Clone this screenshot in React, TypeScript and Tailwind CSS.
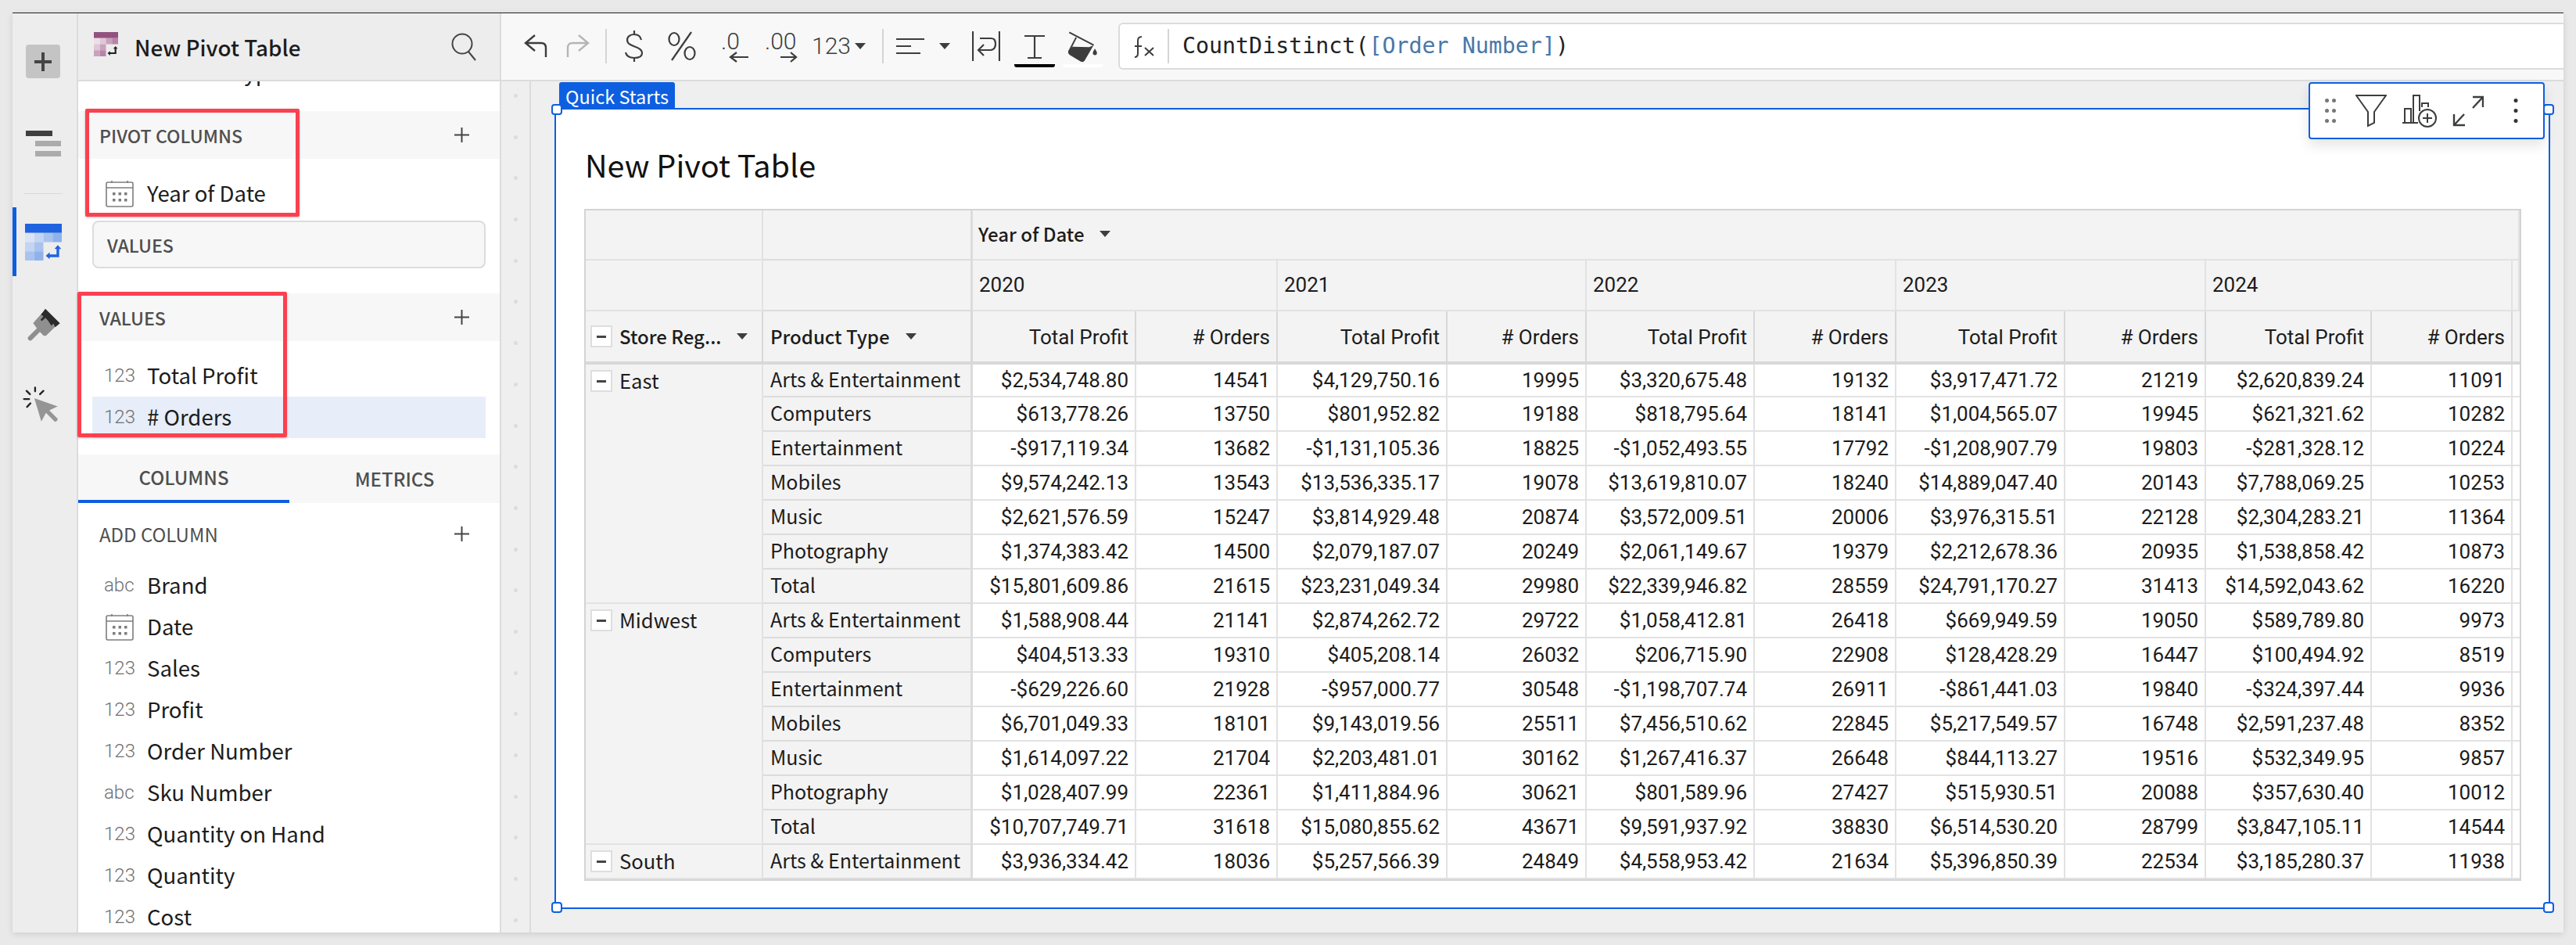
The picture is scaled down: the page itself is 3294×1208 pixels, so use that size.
const sans = "font-['Noto_Sans_CJK_SC',sans-serif]";
const roboto = "font-['Roboto',sans-serif]";

const years = ["2020", "2021", "2022", "2023", "2024"];

const rows: { group?: string; span?: number; label: string; cells: string[] }[] = [
  { group: "East", span: 7, label: "Arts & Entertainment", cells: ["$2,534,748.80", "14541", "$4,129,750.16", "19995", "$3,320,675.48", "19132", "$3,917,471.72", "21219", "$2,620,839.24", "11091"] },
  { label: "Computers", cells: ["$613,778.26", "13750", "$801,952.82", "19188", "$818,795.64", "18141", "$1,004,565.07", "19945", "$621,321.62", "10282"] },
  { label: "Entertainment", cells: ["-$917,119.34", "13682", "-$1,131,105.36", "18825", "-$1,052,493.55", "17792", "-$1,208,907.79", "19803", "-$281,328.12", "10224"] },
  { label: "Mobiles", cells: ["$9,574,242.13", "13543", "$13,536,335.17", "19078", "$13,619,810.07", "18240", "$14,889,047.40", "20143", "$7,788,069.25", "10253"] },
  { label: "Music", cells: ["$2,621,576.59", "15247", "$3,814,929.48", "20874", "$3,572,009.51", "20006", "$3,976,315.51", "22128", "$2,304,283.21", "11364"] },
  { label: "Photography", cells: ["$1,374,383.42", "14500", "$2,079,187.07", "20249", "$2,061,149.67", "19379", "$2,212,678.36", "20935", "$1,538,858.42", "10873"] },
  { label: "Total", cells: ["$15,801,609.86", "21615", "$23,231,049.34", "29980", "$22,339,946.82", "28559", "$24,791,170.27", "31413", "$14,592,043.62", "16220"] },
  { group: "Midwest", span: 7, label: "Arts & Entertainment", cells: ["$1,588,908.44", "21141", "$2,874,262.72", "29722", "$1,058,412.81", "26418", "$669,949.59", "19050", "$589,789.80", "9973"] },
  { label: "Computers", cells: ["$404,513.33", "19310", "$405,208.14", "26032", "$206,715.90", "22908", "$128,428.29", "16447", "$100,494.92", "8519"] },
  { label: "Entertainment", cells: ["-$629,226.60", "21928", "-$957,000.77", "30548", "-$1,198,707.74", "26911", "-$861,441.03", "19840", "-$324,397.44", "9936"] },
  { label: "Mobiles", cells: ["$6,701,049.33", "18101", "$9,143,019.56", "25511", "$7,456,510.62", "22845", "$5,217,549.57", "16748", "$2,591,237.48", "8352"] },
  { label: "Music", cells: ["$1,614,097.22", "21704", "$2,203,481.01", "30162", "$1,267,416.37", "26648", "$844,113.27", "19516", "$532,349.95", "9857"] },
  { label: "Photography", cells: ["$1,028,407.99", "22361", "$1,411,884.96", "30621", "$801,589.96", "27427", "$515,930.51", "20088", "$357,630.40", "10012"] },
  { label: "Total", cells: ["$10,707,749.71", "31618", "$15,080,855.62", "43671", "$9,591,937.92", "38830", "$6,514,530.20", "28799", "$3,847,105.11", "14544"] },
  { group: "South", span: 1, label: "Arts & Entertainment", cells: ["$3,936,334.42", "18036", "$5,257,566.39", "24849", "$4,558,953.42", "21634", "$5,396,850.39", "22534", "$3,185,280.37", "11938"] },
];

const fields: { type: string; name: string }[] = [
  { type: "abc", name: "Brand" },
  { type: "date", name: "Date" },
  { type: "123", name: "Sales" },
  { type: "123", name: "Profit" },
  { type: "123", name: "Order Number" },
  { type: "abc", name: "Sku Number" },
  { type: "123", name: "Quantity on Hand" },
  { type: "123", name: "Quantity" },
  { type: "123", name: "Cost" },
];

function Caret({ className = "" }: { className?: string }) {
  return (
    <svg width="14" height="8" viewBox="0 0 14 8" className={className}>
      <path d="M0 0h14L7 8z" fill="#3d3d3d" />
    </svg>
  );
}

function PlusIcon() {
  return (
    <svg width="19" height="19" viewBox="0 0 19 19" stroke="#444" strokeWidth="2">
      <path d="M9.5 0v19M0 9.5h19" />
    </svg>
  );
}

function CalendarIcon() {
  return (
    <svg width="36" height="35" viewBox="0 0 36 35" fill="none" stroke="#7d7d7d" strokeWidth="1.6">
      <rect x="1" y="3" width="34" height="31" rx="2" />
      <path d="M1 10h34M8 1v3M28 1v3" />
      <g fill="#7d7d7d" stroke="none">
        <rect x="9" y="16" width="3.5" height="3.5" />
        <rect x="16.5" y="16" width="3.5" height="3.5" />
        <rect x="24" y="16" width="3.5" height="3.5" />
        <rect x="9" y="24" width="3.5" height="3.5" />
        <rect x="16.5" y="24" width="3.5" height="3.5" />
        <rect x="24" y="24" width="3.5" height="3.5" />
      </g>
    </svg>
  );
}

function PivotIcon({ size, top, cells, arrow }: { size: number; top: string; cells: string[]; arrow: string }) {
  return (
    <svg width={size} height={size} viewBox="0 0 140 140">
      <rect width="140" height="35" fill={top} />
      <rect x="0" y="35" width="35" height="35" fill={cells[0]} />
      <rect x="35" y="35" width="35" height="35" fill={cells[1]} />
      <rect x="70" y="35" width="35" height="35" fill={cells[2]} />
      <rect x="105" y="35" width="35" height="35" fill={cells[3]} />
      <rect x="0" y="70" width="35" height="35" fill={cells[1]} />
      <rect x="35" y="70" width="35" height="35" fill={cells[2]} />
      <rect x="0" y="105" width="35" height="35" fill={cells[2]} />
      <rect x="35" y="105" width="35" height="35" fill={cells[3]} />
      <path d="M86 122h39V92" fill="none" stroke={arrow} strokeWidth="10" />
      <path d="M112 96l13-15 13 15zM94 109l-15 13 15 13z" fill={arrow} />
    </svg>
  );
}

function Rail() {
  return (
    <div className="flex w-[84px] shrink-0 flex-col border-r-2 border-[#dcdcdc] bg-[#ededed]">
      <div className="ml-[17px] mt-[40px] flex h-[43px] w-[44px] items-center justify-center rounded-[4px] bg-[#c4c4c4]">
        <svg width="22" height="24" viewBox="0 0 22 24" stroke="#444" strokeWidth="4">
          <path d="M11 0v24M0 12h22" />
        </svg>
      </div>
      <div className="ml-[17px] mt-[67px] h-[33px] w-[45px]">
        <svg width="45" height="33" viewBox="0 0 45 33">
          <rect x="0" y="0" width="34" height="7" fill="#3f3f3f" />
          <rect x="12" y="13" width="33" height="7" fill="#ababab" />
          <rect x="12" y="26" width="33" height="7" fill="#ababab" />
        </svg>
      </div>
      <div className="ml-[14px] mt-[47px] h-[1px] w-[50px] bg-[#d8d8d8]" />
      <div className="mt-[17px] flex h-[88px] items-center border-l-[5px] border-[#0d5fe0] pl-[11px]">
        <PivotIcon size={47} top="#1f63e0" cells={["#dbe4f5", "#c3d5f3", "#a8c3ee", "#8fb2ea"]} arrow="#1f63e0" />
      </div>
      <svg width="45" height="45" viewBox="50 370 135 135" className="ml-[17px] mt-[40px]">
        <path d="M67 488L97 458" stroke="#8f8f8f" strokeWidth="18" strokeLinecap="round" />
        <path d="M78 430L112 392L165 442L128 478Q118 482 110 470L98 458Z" fill="#8f8f8f" />
        <path d="M108 398L125 375L181 431L163 446L156 432L148 440L135 420L125 410L112 422L106 418L118 404Z" fill="#2b2b2b" />
      </svg>
      <svg width="48" height="48" viewBox="40 670 145 145" className="ml-[13px] mt-[55px]">
        <path d="M85 718L175 750L143 765L175 798Q176 802 172 806Q167 810 163 808L130 775L112 808Z" fill="#959595" />
        <path d="M88 677v15M55 690l13 13M45 722h20M57 752l13-14M120 690l-13 13" stroke="#222" strokeWidth="7" strokeLinecap="round" />
      </svg>
    </div>
  );
}

function SectionHead({ title }: { title: string }) {
  return (
    <div className="flex h-[61px] shrink-0 items-center justify-between bg-[#f7f7f7] pl-[27px] pr-[39px]">
      <span className={`${sans} text-[23.2px] leading-[30px] font-medium text-[#4f4f4f]`}>{title}</span>
      <PlusIcon />
    </div>
  );
}

function Field({ type, name, selected }: { type: string; name: string; selected?: boolean }) {
  return (
    <div className={`flex h-[53px] shrink-0 items-center ${selected ? "mx-[18px] bg-[#e7edf9] pl-[15px]" : "pl-[33px]"}`}>
      <span className="flex w-[55px] shrink-0">
        {type === "date" ? (
          <span className="ml-[2px]">
            <CalendarIcon />
          </span>
        ) : (
          <span className={`${roboto} mb-[2px] text-[24px] leading-[30px] font-light text-[#6f6f6f]`}>{type}</span>
        )}
      </span>
      <span className={`${sans} mb-[4px] text-[27.6px] leading-[36px] text-[#1c1c1c]`}>{name}</span>
    </div>
  );
}

function Panel() {
  return (
    <div className="flex w-[541px] shrink-0 flex-col overflow-hidden border-r-2 border-[#dcdcdc] bg-white">
      <div className="flex h-[87px] shrink-0 items-center border-b-2 border-[#dcdcdc] bg-[#ededed] pl-[20px] pr-[30px]">
        <span className="mt-[-6px]">
          <PivotIcon size={31} top="#92527f" cells={["#ecdfe8", "#dfc7d8", "#c9a1bc", "#b784a8"]} arrow="#222" />
        </span>
        <span className={`${sans} ml-[21px] text-[27.8px] leading-[38px] font-medium text-[#1c1c1c]`}>New Pivot Table</span>
        <svg width="32" height="36" viewBox="0 0 32 36" fill="none" stroke="#444" strokeWidth="2" className="ml-auto">
          <circle cx="14" cy="14" r="12.5" />
          <path d="M22 24l9 11" />
        </svg>
      </div>
      <div className="h-[38px] shrink-0 overflow-hidden">
        <div className={`${sans} mt-[-30px] pl-[88px] text-[27.6px] leading-[36px] text-[#1c1c1c]`}>Product Type</div>
      </div>
      <SectionHead title="PIVOT COLUMNS" />
      <div className="h-[79px] shrink-0 pt-[18px]">
        <Field type="date" name="Year of Date" />
      </div>
      <div className="mx-[18px] flex h-[61px] shrink-0 items-center rounded-[8px] border-2 border-[#dcdcdc] bg-[#f7f7f7] pl-[17px]">
        <span className={`${sans} text-[23.2px] leading-[30px] font-medium text-[#4f4f4f]`}>VALUES</span>
      </div>
      <div className="h-[32px] shrink-0" />
      <SectionHead title="VALUES" />
      <div className="h-[18px] shrink-0" />
      <Field type="123" name="Total Profit" />
      <Field type="123" name="# Orders" selected />
      <div className="h-[21px] shrink-0" />
      <div className="flex h-[62px] shrink-0 bg-[#f7f7f7]">
        <div className={`${sans} flex w-[270px] items-center justify-center border-b-4 border-[#0d5fe0] text-[24px] font-medium text-[#4f4f4f]`}>COLUMNS</div>
        <div className={`${sans} flex flex-1 items-center justify-center text-[24px] font-medium text-[#4f4f4f]`}>METRICS</div>
      </div>
      <div className="flex h-[79px] shrink-0 items-center justify-between pl-[27px] pr-[39px]">
        <span className={`${sans} text-[24px] leading-[30px] text-[#4f4f4f]`}>ADD COLUMN</span>
        <PlusIcon />
      </div>
      {fields.map((f) => (
        <Field key={f.name} type={f.type} name={f.name} />
      ))}
    </div>
  );
}

function Toolbar() {
  const sep = "h-[44px] w-[2px] shrink-0 bg-[#d4d4d4]";
  return (
    <div className="flex h-[87px] shrink-0 items-center border-b-2 border-[#dcdcdc] bg-[#f8f8f8] pb-[2px]">
      <svg width="30" height="30" viewBox="0 0 30 30" fill="none" stroke="#3d3d3d" strokeWidth="2.4" className="ml-[29px] shrink-0">
        <path d="M2 11h20q6 0 6 6v12M14 1L2 11l12 10" />
      </svg>
      <svg width="30" height="30" viewBox="0 0 30 30" fill="none" stroke="#b5b5b5" strokeWidth="2.4" className="ml-[24px] shrink-0">
        <path d="M28 11H8q-6 0-6 6v12M16 1l12 10-12 10" />
      </svg>
      <div className={`${sep} ml-[20px]`} />
      <svg width="24" height="42" viewBox="0 0 24 42" fill="none" stroke="#3d3d3d" strokeWidth="2.2" className="ml-[23px] shrink-0">
        <path d="M21 13c-1-5-5-7-9-7S3 8 3 13c0 10 19 7 19 17 0 4-4 6-10 6S2 34 1 29M12 1v5M12 36v5" />
      </svg>
      <svg width="36" height="38" viewBox="0 0 36 38" fill="none" stroke="#3d3d3d" strokeWidth="2.2" className="ml-[31px] shrink-0">
        <ellipse cx="8" cy="10" rx="6.5" ry="8" />
        <ellipse cx="28" cy="28" rx="6.5" ry="8" />
        <path d="M30 1L5 37" />
      </svg>
      <svg width="36" height="52" viewBox="0 0 36 52" className="ml-[32px] shrink-0">
        <text x="0" y="30" fontFamily="Roboto" fontWeight="300" fontSize="30" fill="#3d3d3d">.0</text>
        <path d="M35 40H13M20 34l-8 6 8 6" fill="none" stroke="#3d3d3d" strokeWidth="2.2" />
      </svg>
      <svg width="42" height="52" viewBox="0 0 42 52" className="ml-[20px] shrink-0">
        <text x="0" y="30" fontFamily="Roboto" fontWeight="300" fontSize="30" fill="#3d3d3d">.00</text>
        <path d="M20 40h20M33 34l7 6-7 6" fill="none" stroke="#3d3d3d" strokeWidth="2.2" />
      </svg>
      <span className={`${roboto} ml-[18px] text-[30px] leading-[36px] font-light text-[#3d3d3d]`}>123</span>
      <Caret className="ml-[5px] shrink-0" />
      <div className={`${sep} ml-[21px]`} />
      <svg width="36" height="22" viewBox="0 0 36 22" stroke="#3d3d3d" strokeWidth="2.2" className="ml-[16px] shrink-0">
        <path d="M0 2h36M0 11h19M0 20h31" />
      </svg>
      <Caret className="ml-[19px] shrink-0" />
      <svg width="36" height="38" viewBox="0 0 36 38" fill="none" stroke="#3d3d3d" strokeWidth="2.2" className="ml-[28px] shrink-0">
        <path d="M1 0v38M35 0v38M10 9h14q6 0 6 7t-6 8H9M15 17l-7 7 7 7" />
      </svg>
      <div className="ml-[18px] flex w-[52px] shrink-0 flex-col items-center self-end pb-[14px]">
        <svg width="28" height="32" viewBox="0 0 28 32" fill="none" stroke="#3d3d3d" strokeWidth="2.2">
          <path d="M1 2h26M14 2v28M5 30h18" />
        </svg>
        <div className="mt-[6px] h-[4px] w-[52px] rounded-b-[3px] bg-black" />
      </div>
      <div className="ml-[10px] flex w-[51px] shrink-0 flex-col items-center self-end pb-[14px]">
        <svg width="41" height="41" viewBox="700 55 125 125">
          <path d="M710 62L805 112" stroke="#3d3d3d" strokeWidth="6" />
          <path d="M737 82L708 138" stroke="#3d3d3d" strokeWidth="6" />
          <path d="M722 118L788 120L805 112L770 172Q765 180 755 176L712 150Q703 144 707 136Z" fill="#3d3d3d" />
          <path d="M810 126Q802 138 802 143a8 8 0 0016 0Q818 138 810 126Z" fill="#3d3d3d" />
        </svg>
        <div className="mt-[2px] h-[4px] w-[51px] rounded-b-[3px] bg-white" />
      </div>
      <div className="ml-[20px] flex h-[60px] flex-1 items-center rounded-l-[6px] border-y-2 border-l-2 border-[#dcdcdc] bg-white">
        <svg width="26" height="28" viewBox="0 0 26 28" fill="none" stroke="#3d3d3d" strokeWidth="2" className="ml-[18px] mr-[17px] mt-[3px] shrink-0">
          <path d="M10 1Q5 1 5 6V22Q5 27 1 27M1 13H10M14 15L25 25M25 15L14 25" />
        </svg>
        <div className={sep} />
        <span className="ml-[17px] font-['DejaVu_Sans_Mono',monospace] text-[28.3px] leading-[36px] text-[#222]">
          CountDistinct(<span className="text-[#4a78a8]">[Order Number]</span>)
        </span>
      </div>
    </div>
  );
}

function ExpandBox() {
  return (
    <span className="flex h-[28px] w-[28px] shrink-0 items-center justify-center border-2 border-[#dedede] bg-white">
      <span className="h-[3px] w-[12px] bg-[#444]" />
    </span>
  );
}

const headCell = "border-b-2 border-r-2 border-[#e2e2e2] bg-[#f3f3f3]";
const leftLast = "border-b-2 border-r-[3px] border-[#dcdcdc] bg-[#f3f3f3]";
const bodyCell = `${roboto} flex items-center justify-end border-b-2 border-r-2 border-[#e2e2e2] bg-white pr-[8px] text-[26px] text-[#1c1c1c]`;
const subHead = `${roboto} flex items-center justify-end border-b-[4px] border-r-2 border-[#d8d8d8] bg-[#f3f3f3] pr-[8px] pt-[2px] text-[26px] text-[#1c1c1c]`;

function PivotTable() {
  return (
    <div className="grid w-[2477px] grid-cols-[227px_268px_209px_181px_217px_178px_215px_181px_216px_180px_212px_180px_9px] grid-rows-[64px_65px_68px_42px_repeat(14,44px)] border-2 border-[#d4d4d4]">
      {/* row 1 */}
      <div className={headCell} />
      <div className={leftLast} />
      <div className={`${headCell} col-span-11 flex items-center pb-[2px] pl-[7px]`}>
        <span className={`${sans} text-[24px] leading-[30px] font-medium text-[#1c1c1c]`}>Year of Date</span>
        <Caret className="ml-[19px]" />
      </div>
      {/* row 2 */}
      <div className={headCell} />
      <div className={leftLast} />
      {years.map((y) => (
        <div key={y} className={`${headCell} ${roboto} col-span-2 flex items-center pl-[8px] text-[26px] text-[#1c1c1c]`}>
          {y}
        </div>
      ))}
      <div className={headCell} />
      {/* row 3 */}
      <div className="flex items-center border-b-[4px] border-r-2 border-[#d8d8d8] bg-[#f3f3f3] pl-[6px]">
        <ExpandBox />
        <span className={`${sans} ml-[9px] text-[24px] leading-[30px] font-medium text-[#1c1c1c]`}>Store Reg...</span>
        <Caret className="ml-[20px]" />
      </div>
      <div className="flex items-center border-b-[4px] border-r-[3px] border-[#d8d8d8] bg-[#f3f3f3] pl-[9px]">
        <span className={`${sans} text-[24px] leading-[30px] font-medium text-[#1c1c1c]`}>Product Type</span>
        <Caret className="ml-[20px]" />
      </div>
      {years.map((y) => (
        <div key={y} className="contents">
          <div className={subHead}>Total Profit</div>
          <div className={subHead}># Orders</div>
        </div>
      ))}
      <div className="border-b-[4px] border-[#d8d8d8] bg-[#f3f3f3]" />
      {/* data */}
      {rows.map((r, i) => (
        <div key={i} className="contents">
          {r.group && (
            <div className={`flex items-start border-b-2 border-r-2 border-[#e2e2e2] bg-[#f3f3f3] pl-[6px] pt-[7px] ${r.span === 7 ? "row-span-7" : ""}`}>
              <ExpandBox />
              <span className={`${sans} ml-[9px] mt-[-1px] text-[25.6px] leading-[28px] text-[#1c1c1c]`}>{r.group}</span>
            </div>
          )}
          <div className={`${sans} flex items-center border-b-2 border-r-[3px] border-[#dcdcdc] bg-[#f3f3f3] pb-[3px] pl-[9px] text-[25px] text-[#1c1c1c]`}>{r.label}</div>
          {r.cells.map((c, j) => (
            <div key={j} className={bodyCell}>
              {c}
            </div>
          ))}
          <div className="border-b-2 border-[#e2e2e2] bg-white" />
        </div>
      ))}
    </div>
  );
}

function Handle({ className }: { className: string }) {
  return <span className={`absolute h-[14px] w-[14px] rounded-[4px] border-2 border-[#0d5fe0] bg-white ${className}`} />;
}

function FloatBar() {
  return (
    <div className="absolute right-[5px] top-[-35px] z-10 flex h-[73px] w-[302px] items-center rounded-[4px] border-2 border-[#0d5fe0] bg-white pl-[19px] shadow-[0_8px_16px_rgba(0,0,0,0.1)]">
      <svg width="14" height="31" viewBox="0 0 14 31" fill="#777" className="shrink-0">
        <circle cx="2.5" cy="2.5" r="2.5" />
        <circle cx="11.5" cy="2.5" r="2.5" />
        <circle cx="2.5" cy="15.5" r="2.5" />
        <circle cx="11.5" cy="15.5" r="2.5" />
        <circle cx="2.5" cy="28.5" r="2.5" />
        <circle cx="11.5" cy="28.5" r="2.5" />
      </svg>
      <svg width="40" height="42" viewBox="0 0 40 42" fill="none" stroke="#3d3d3d" strokeWidth="2" className="ml-[25px] shrink-0">
        <path d="M1 1h38L24 22v14l-8 4V22z" />
      </svg>
      <svg width="44" height="42" viewBox="0 0 44 42" fill="none" stroke="#3d3d3d" strokeWidth="2" className="ml-[20px] shrink-0">
        <path d="M0 36h20M3 36V18h8v18M14 36V1h8v20M25 16v-5h8v5" />
        <circle cx="32" cy="30" r="11" />
        <path d="M32 24v12M26 30h12" />
      </svg>
      <svg width="40" height="40" viewBox="0 0 40 40" fill="none" stroke="#3d3d3d" strokeWidth="2.4" className="ml-[20px] shrink-0">
        <path d="M26 16L39 2M26 2h13v13M15 24L2 38M2 24v14h14" />
      </svg>
      <svg width="6" height="31" viewBox="0 0 6 31" fill="#333" className="ml-[38px] shrink-0">
        <circle cx="3" cy="2.5" r="2.5" />
        <circle cx="3" cy="15.5" r="2.5" />
        <circle cx="3" cy="28.5" r="2.5" />
      </svg>
    </div>
  );
}

function Canvas() {
  return (
    <div className="flex min-h-0 flex-1 bg-[#efefef]">
      <div className="flex h-full w-[38px] shrink-0 flex-col items-center gap-[47.7px] overflow-hidden border-r-2 border-[#dcdcdc] pt-[16px]">
        {Array.from({ length: 21 }).map((_, i) => (
          <span key={i} className="h-[5px] w-[5px] shrink-0 rounded-full bg-[#dcdcdc]" />
        ))}
      </div>
      <div className="relative ml-[30px] mt-[34px] h-[1024px] w-[2552px] shrink-0 border-2 border-[#0d5fe0] bg-white pl-[36px]">
        <div className="absolute left-[4px] top-[-35px] flex h-[35px] w-[148px] items-center rounded-t-[3px] bg-[#0d5fe0] pl-[8px]">
          <span className={`${sans} text-[23.5px] leading-[30px] text-white`}>Quick Starts</span>
        </div>
        <Handle className="left-[-6px] top-[-7px]" />
        <Handle className="right-[-7px] top-[-7px]" />
        <Handle className="bottom-[-7px] left-[-6px]" />
        <Handle className="bottom-[-7px] right-[-7px]" />
        <FloatBar />
        <div className="h-[127px] pl-[1px] pt-[42px]">
          <div className={`${sans} text-[39.6px] leading-[56px] text-[#111]`}>New Pivot Table</div>
        </div>
        <PivotTable />
      </div>
    </div>
  );
}

export default function App() {
  return (
    <div className="relative h-[1208px] w-[3294px] overflow-hidden bg-[#e9e9e9] pl-[16px] pt-[16px]">
      <div className="flex h-[1176px] w-[3262px] border-t border-[#222] shadow-[0_2px_8px_rgba(0,0,0,0.12)]">
        <Rail />
        <Panel />
        <div className="flex min-w-0 flex-1 flex-col overflow-hidden">
          <Toolbar />
          <Canvas />
        </div>
      </div>
      {/* red annotation boxes */}
      <div className="pointer-events-none absolute left-[109px] top-[139px] h-[138px] w-[274px] rounded-[2px] border-[5px] border-[#fb4050] shadow-[0_1px_3px_rgba(0,0,0,0.25)]" />
      <div className="pointer-events-none absolute left-[99px] top-[373px] h-[186px] w-[268px] rounded-[2px] border-[5px] border-[#fb4050] shadow-[0_1px_3px_rgba(0,0,0,0.25)]" />
    </div>
  );
}
